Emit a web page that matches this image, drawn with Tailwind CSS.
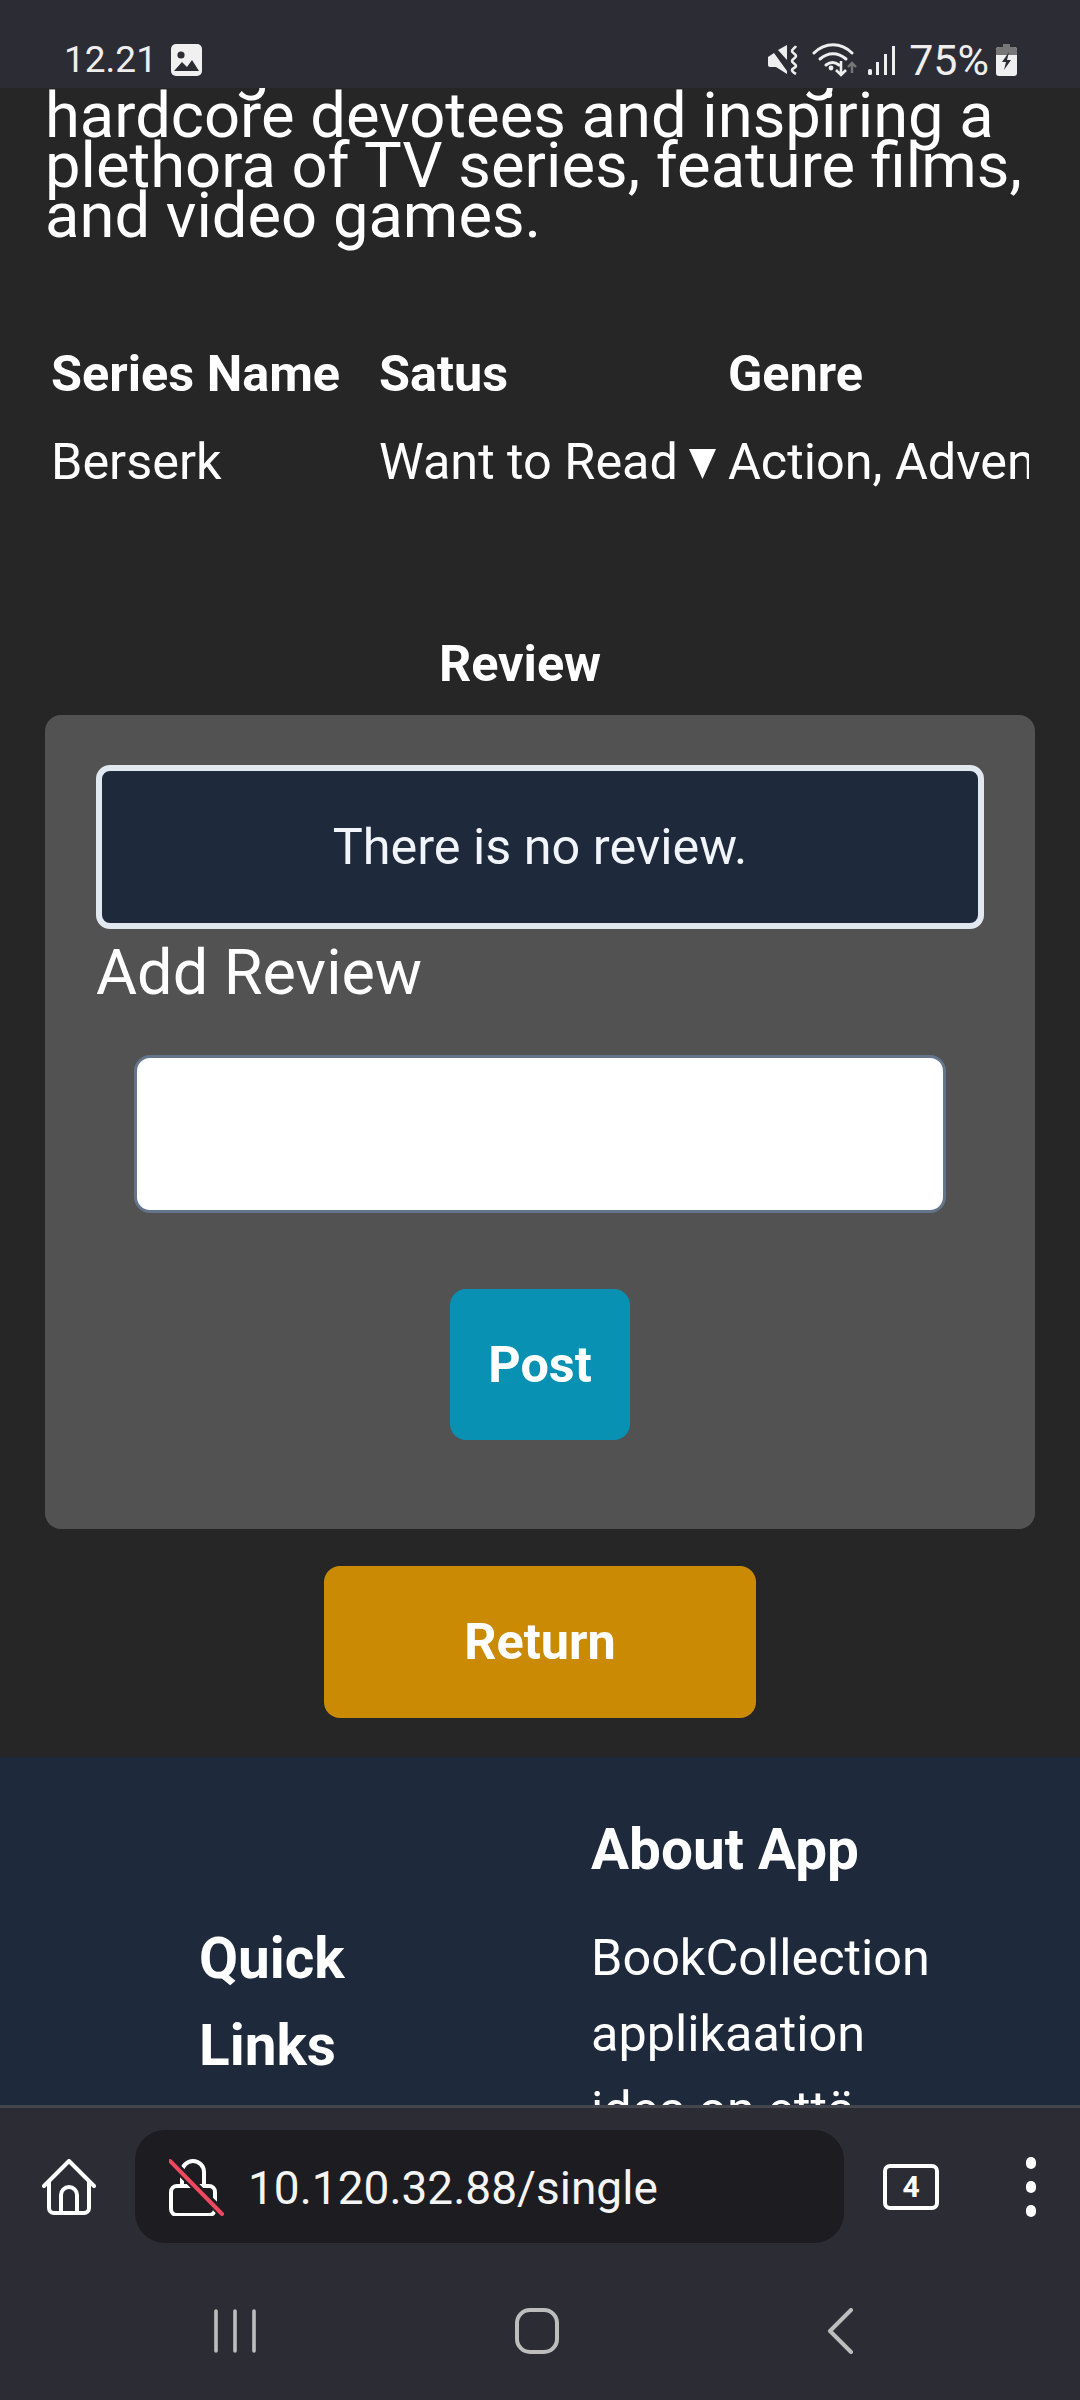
<!DOCTYPE html>
<html>
<head>
    <title>BookCollection</title>
    <script src="https://cdn.jsdelivr.net/npm/@tailwindcss/browser@4"></script>
</head>
<body class="bg-[#262626]">
<div class="flex flex-col w-[1080px] h-[2400px] overflow-hidden text-white font-['Roboto',sans-serif]">
    <!-- status bar -->
    <div class="h-[88px] shrink-0 bg-[#2c2c35] flex items-start justify-between pt-[41px] pl-[64px] pr-[63px]">
        <div class="flex items-center gap-[14px] h-[38px] text-[37px] text-[#eeeeee]">
            <span>12.21</span>
            <svg width="31" height="32" viewBox="0 0 31 32">
                <rect width="31" height="32" rx="5" fill="#f0f0f0"/>
                <circle cx="10" cy="11" r="3.6" fill="#2c2c35"/>
                <path d="M3 27l8-9 5 5 5-7 7 11z" fill="#2c2c35"/>
            </svg>
        </div>
        <div class="flex items-center h-[38px] text-[#eeeeee]">
            <svg width="31" height="30" viewBox="0 0 31 30" class="mr-[14px]">
                <path d="M1 12l6-4 13 18v3l-11-7H3a2 2 0 0 1-2-2z" fill="#eeeeee"/>
                <path d="M11 5l9-5v15z" fill="#eeeeee"/>
                <path d="M29 1c-1 2-4 3-4 5s4 3 4 5-4 3-4 5 4 3 4 5-4 2-4 4 2 3 4 4" stroke="#eeeeee" stroke-width="2.6" fill="none"/>
            </svg>
            <svg width="46" height="36" viewBox="0 0 46 36" class="mr-[10px]" fill="none">
                <path d="M2 11c11-11 27-11 38 0" stroke="#eeeeee" stroke-width="3" stroke-linecap="round"/>
                <path d="M8 17c8-7 18-7 26 0" stroke="#eeeeee" stroke-width="3" stroke-linecap="round"/>
                <path d="M14 23c4-3 9-3 13 0" stroke="#eeeeee" stroke-width="3" stroke-linecap="round"/>
                <circle cx="19" cy="26" r="2.4" fill="#eeeeee"/>
                <path d="M29 19v14m-5-5l5 5 5-5" stroke="#eeeeee" stroke-width="2.6"/>
                <path d="M40 31V21m-4 4l4-4 4 4" stroke="#777777" stroke-width="2.4"/>
            </svg>
            <svg width="28" height="30" viewBox="0 0 28 30" class="mr-[13px]">
                <rect x="0" y="24" width="4" height="6" rx="1.5" fill="#eeeeee"/>
                <rect x="8" y="17" width="3" height="13" fill="#eeeeee"/>
                <rect x="16" y="9" width="3" height="21" fill="#eeeeee"/>
                <rect x="24" y="1" width="3" height="29" fill="#eeeeee"/>
            </svg>
            <span class="text-[43px] mr-[7px]">75%</span>
            <svg width="21" height="32" viewBox="0 0 21 32">
                <path d="M7 0h7v3h4a3 3 0 0 1 3 3v23a3 3 0 0 1-3 3H3a3 3 0 0 1-3-3V6a3 3 0 0 1 3-3h4z" fill="#f0f0f0"/>
                <path d="M7 0h7v3h4a3 3 0 0 1 3 3v5H0V6a3 3 0 0 1 3-3h4z" fill="#777777"/>
                <path d="M13 8l-7 10h4l-2 8 7-10h-4z" fill="#2c2c35"/>
            </svg>
        </div>
    </div>

    <!-- page content, scrolled part way down -->
    <div class="h-[2017px] shrink-0 overflow-hidden flex flex-col">
        <div class="bg-[#262626] h-[1669px] shrink-0 flex flex-col">
            <p class="mt-[-48px] pl-[45px] text-[63.3px] leading-[50px] whitespace-nowrap">
                The saga has been enduring for decades<br>
                hardcore devotees and inspiring a<br>
                plethora of TV series, feature films,<br>
                and video games.
            </p>
            <div class="mt-[90px] mx-[45px] w-[984px] overflow-hidden">
                <div class="grid grid-cols-[328px_349px_600px] text-[50.4px] leading-[88px] whitespace-nowrap pl-[6px]">
                    <div class="font-bold">Series Name</div>
                    <div class="font-bold">Satus</div>
                    <div class="font-bold">Genre</div>
                    <div>Berserk</div>
                    <div class="flex items-center gap-[11px]">
                        <span>Want to Read</span>
                        <svg width="27" height="30" viewBox="0 0 27 30" class="mt-[3px]"><path d="M0 0h27L13.5 30z" fill="#ffffff"/></svg>
                    </div>
                    <div>Action, Adventure</div>
                </div>
            </div>
            <h2 class="mt-[130px] pr-[40px] text-center text-[50.4px] leading-[56px] font-bold">Review</h2>
            <div class="mt-[23px] mx-[45px] w-[990px] h-[814px] bg-[#525252] rounded-[16px] px-[51px] pt-[50px] flex flex-col">
                <div class="h-[164px] bg-[#1e293b] border-[6px] border-[#e2e8f0] rounded-[14px] flex items-center justify-center text-[50.4px] text-[#f1f5f9]">
                    There is no review.
                </div>
                <div class="text-[63px] leading-[88px]">Add Review</div>
                <textarea class="block mt-[38px] mx-[38px] w-[812px] h-[158px] bg-white border-[3px] border-[#64748b] rounded-[16px] resize-none"></textarea>
                <button class="mt-[76px] mx-auto w-[180px] h-[151px] bg-[#0891b2] rounded-[16px] text-[50.4px] font-bold">Post</button>
            </div>
            <button class="mt-[37px] ml-[324px] w-[432px] h-[152px] bg-[#ca8a04] rounded-[16px] text-[50.4px] font-bold">Return</button>
        </div>
        <!-- footer, cut off by the browser toolbar -->
        <div class="flex-1 bg-[#1e293b] flex items-start overflow-hidden pl-[199px] gap-[247px]">
            <div class="mt-[158px] text-[56.7px] leading-[87px] font-bold w-[145px] shrink-0">Quick Links</div>
            <div class="w-[400px] shrink-0 pt-[60px]">
                <h3 class="text-[56.7px] leading-[66px] font-bold">About App</h3>
                <p class="mt-[37px] text-[50.4px] leading-[76px]">BookCollection<br>applikaation<br>idea on että</p>
            </div>
        </div>
    </div>

    <!-- browser toolbar -->
    <div class="flex-1 bg-[#2c2c35] border-t-[3px] border-[#45454d] flex flex-col">
        <div class="flex items-center mt-[22px] pl-[42px]">
            <svg width="54" height="56" viewBox="0 0 54 56" fill="none" stroke="#ffffff" stroke-width="4" stroke-linecap="round" stroke-linejoin="round">
                <path d="M2 27L27 2l25 25"/>
                <path d="M7 23v26a5 5 0 0 0 5 5h30a5 5 0 0 0 5-5V23"/>
                <path d="M19 54V36a8 8 0 0 1 16 0v18"/>
            </svg>
            <div class="ml-[39px] w-[709px] h-[113px] bg-[#1c1c21] rounded-[30px] flex items-center pl-[34px]">
                <svg width="56" height="58" viewBox="0 0 56 58" fill="none" stroke-linecap="round">
                    <rect x="2" y="28" width="44" height="29" rx="6" stroke="#ffffff" stroke-width="4"/>
                    <path d="M13 28V14a11 11 0 0 1 22 0v14" stroke="#ffffff" stroke-width="4"/>
                    <path d="M1 3l53 53" stroke="#1c1c21" stroke-width="9"/>
                    <path d="M1 3l52 53" stroke="#f0485e" stroke-width="4"/>
                </svg>
                <span class="ml-[23px] mt-[3px] text-[46px] text-[#f4f4f4]">10.120.32.88/single</span>
            </div>
            <div class="ml-[39px] w-[56px] h-[46px] border-[4px] border-white rounded-[7px] flex items-center justify-center text-[30px] leading-none font-bold">4</div>
            <div class="ml-[87px] flex flex-col gap-[12px]">
                <div class="w-[10px] h-[12px] bg-white rounded-full"></div>
                <div class="w-[10px] h-[12px] bg-white rounded-full"></div>
                <div class="w-[10px] h-[12px] bg-white rounded-full"></div>
            </div>
        </div>
        <div class="flex items-center mt-[65px] pl-[213px]">
            <svg width="44" height="44" viewBox="0 0 44 44" stroke="#bdbdbd" stroke-width="3.6" stroke-linecap="round">
                <path d="M3 2v40M22 2v40M41 2v40"/>
            </svg>
            <svg width="44" height="46" viewBox="0 0 44 46" fill="none" class="ml-[258px]">
                <rect x="2" y="2" width="40" height="42" rx="13" stroke="#bdbdbd" stroke-width="4"/>
            </svg>
            <svg width="28" height="46" viewBox="0 0 28 46" fill="none" class="ml-[267px]">
                <path d="M25 2L4 23l21 21" stroke="#bdbdbd" stroke-width="4" stroke-linecap="round" stroke-linejoin="round"/>
            </svg>
        </div>
    </div>
</div>
</body>
</html>
